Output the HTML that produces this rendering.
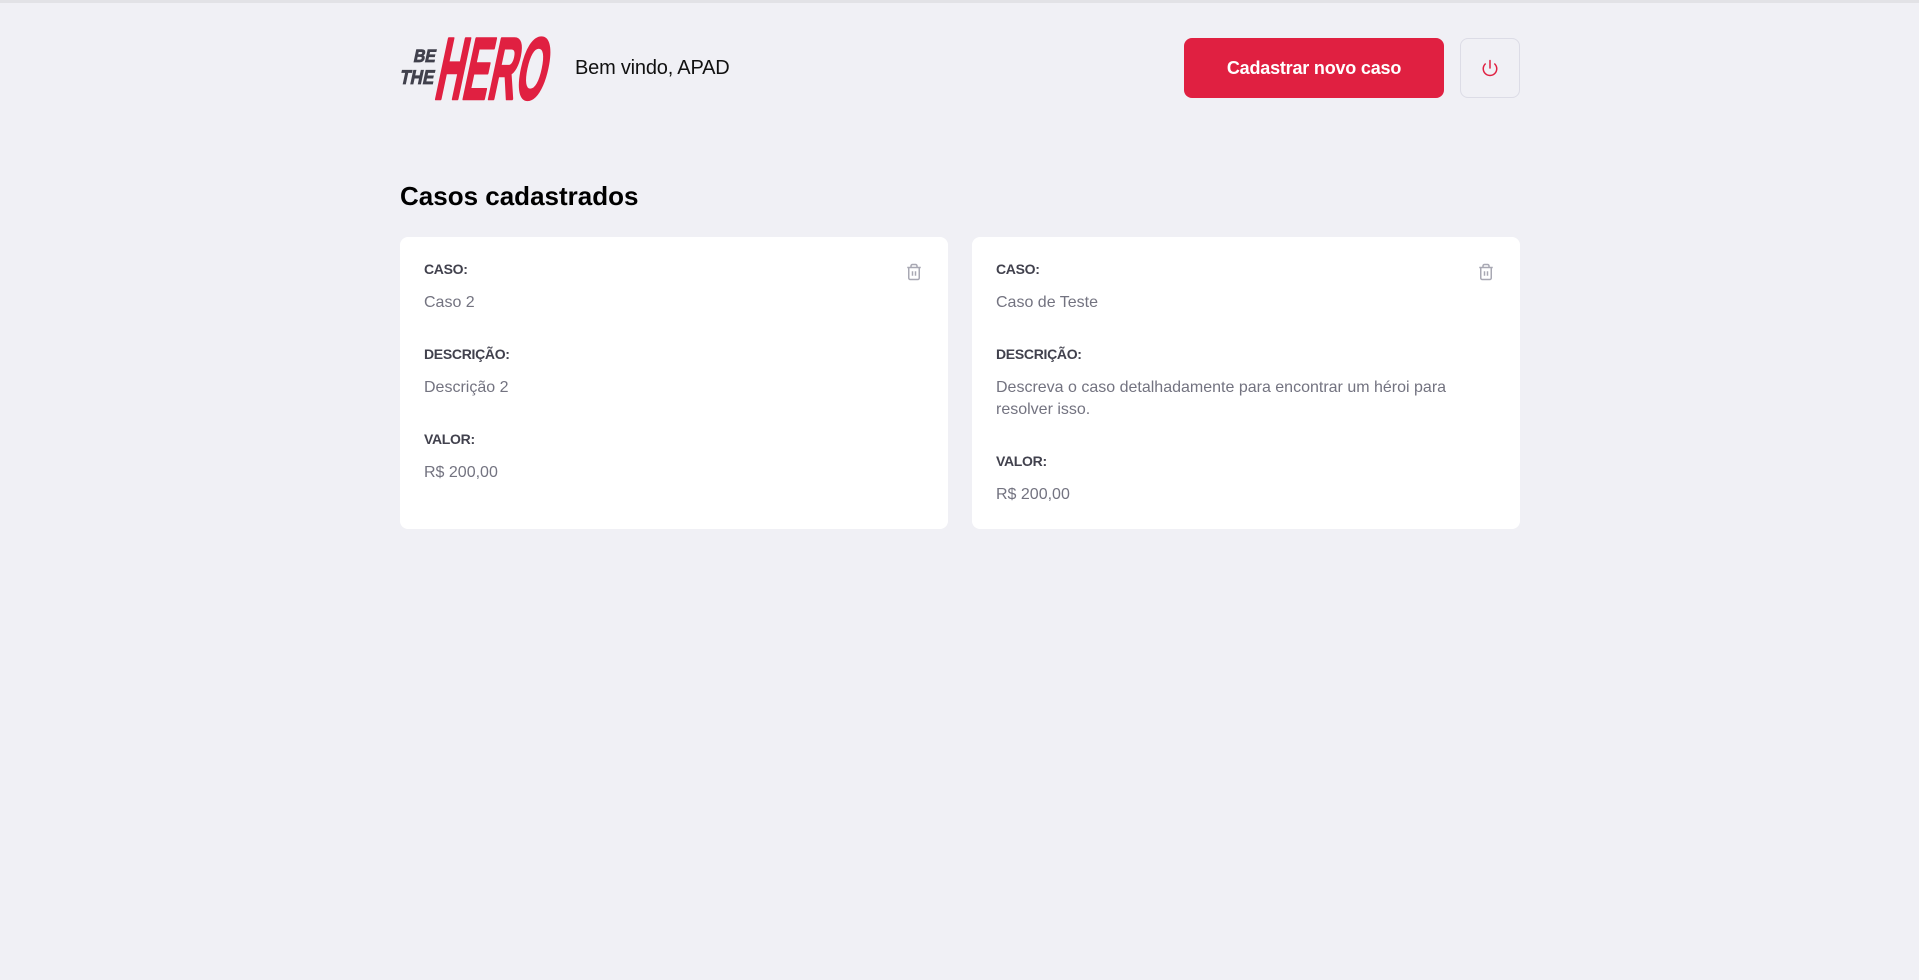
<!DOCTYPE html>
<html><head><meta charset="utf-8"><style>
*{margin:0;padding:0;box-sizing:border-box}
body{width:1919px;height:980px;background:#f0f0f5;font-family:"Liberation Sans",Roboto,sans-serif;border-top:3px solid #e2e2e6;overflow:hidden}
.wrap{position:absolute;left:400px;width:1120px;top:0}
.logo{position:absolute;left:-5px;top:33px}
.welcome{position:absolute;left:175px;top:56px;font-size:20px;color:#111;line-height:24px;letter-spacing:-0.2px}
.btn{position:absolute;left:784px;top:38px;width:260px;height:60px;background:#e02041;border-radius:8px;color:#fff;font-weight:bold;font-size:18px;display:flex;align-items:center;justify-content:center;letter-spacing:-0.2px}
.pw{position:absolute;left:1060px;top:38px;width:60px;height:60px;border:1px solid #dcdce6;border-radius:8px;display:flex;align-items:center;justify-content:center}
h1{position:absolute;left:0;top:180px;font-size:26px;line-height:32px;color:#000}
.card{position:absolute;top:237px;width:548px;height:292px;background:#fff;border-radius:8px;padding:24px}
.card strong{display:block;font-size:14px;line-height:16px;color:#41414d;margin-bottom:15px;letter-spacing:-0.3px}
.card p{font-size:16px;line-height:22px;color:#737380;margin-bottom:32px}
.card p:last-of-type{margin-bottom:0}
.trash{position:absolute;right:25px;top:25px}
</style></head><body>
<div class="wrap">
<svg class="logo" width="160" height="70" viewBox="0 0 160 70">
<g transform="skewX(-12)">
<text x="24" y="29" font-family="Liberation Sans" font-weight="bold" font-size="18" fill="#41414d" stroke="#41414d" stroke-width="0.8" textLength="22" lengthAdjust="spacingAndGlyphs">BE</text>
<text x="15" y="51" font-family="Liberation Sans" font-weight="bold" font-size="20" fill="#41414d" stroke="#41414d" stroke-width="0.8" textLength="34" lengthAdjust="spacingAndGlyphs">THE</text>
<text x="52" y="66" font-family="Liberation Sans" font-weight="bold" font-size="88" fill="#e02041" stroke="#e02041" stroke-width="2.5" stroke-linejoin="round" textLength="110" lengthAdjust="spacingAndGlyphs">HERO</text>
</g>
</svg>
<div class="welcome">Bem vindo, APAD</div>
<div class="btn">Cadastrar novo caso</div>
<div class="pw"><svg width="18" height="18" viewBox="0 0 24 24" fill="none" stroke="#e02041" stroke-width="2" stroke-linecap="round"><path d="M18.36 6.64a9 9 0 1 1-12.73 0"/><line x1="12" y1="2" x2="12" y2="12"/></svg></div>
<h1>Casos cadastrados</h1>
<div class="card" style="left:0">
<strong>CASO:</strong><p>Caso 2</p>
<strong>DESCRIÇÃO:</strong><p>Descrição 2</p>
<strong>VALOR:</strong><p>R$ 200,00</p>
<svg class="trash" width="18" height="20" viewBox="0 0 24 24" fill="none" stroke="#a8a8b3" stroke-width="2"><polyline points="3 6 5 6 21 6"/><path d="M19 6v14a2 2 0 0 1-2 2H7a2 2 0 0 1-2-2V6m3 0V4a2 2 0 0 1 2-2h4a2 2 0 0 1 2 2v2"/><line x1="10" y1="11" x2="10" y2="17"/><line x1="14" y1="11" x2="14" y2="17"/></svg>
</div>
<div class="card" style="left:572px">
<strong>CASO:</strong><p>Caso de Teste</p>
<strong>DESCRIÇÃO:</strong><p>Descreva o caso detalhadamente para encontrar um héroi para resolver isso.</p>
<strong>VALOR:</strong><p>R$ 200,00</p>
<svg class="trash" width="18" height="20" viewBox="0 0 24 24" fill="none" stroke="#a8a8b3" stroke-width="2"><polyline points="3 6 5 6 21 6"/><path d="M19 6v14a2 2 0 0 1-2 2H7a2 2 0 0 1-2-2V6m3 0V4a2 2 0 0 1 2-2h4a2 2 0 0 1 2 2v2"/><line x1="10" y1="11" x2="10" y2="17"/><line x1="14" y1="11" x2="14" y2="17"/></svg>
</div>
</div>
</body></html>
